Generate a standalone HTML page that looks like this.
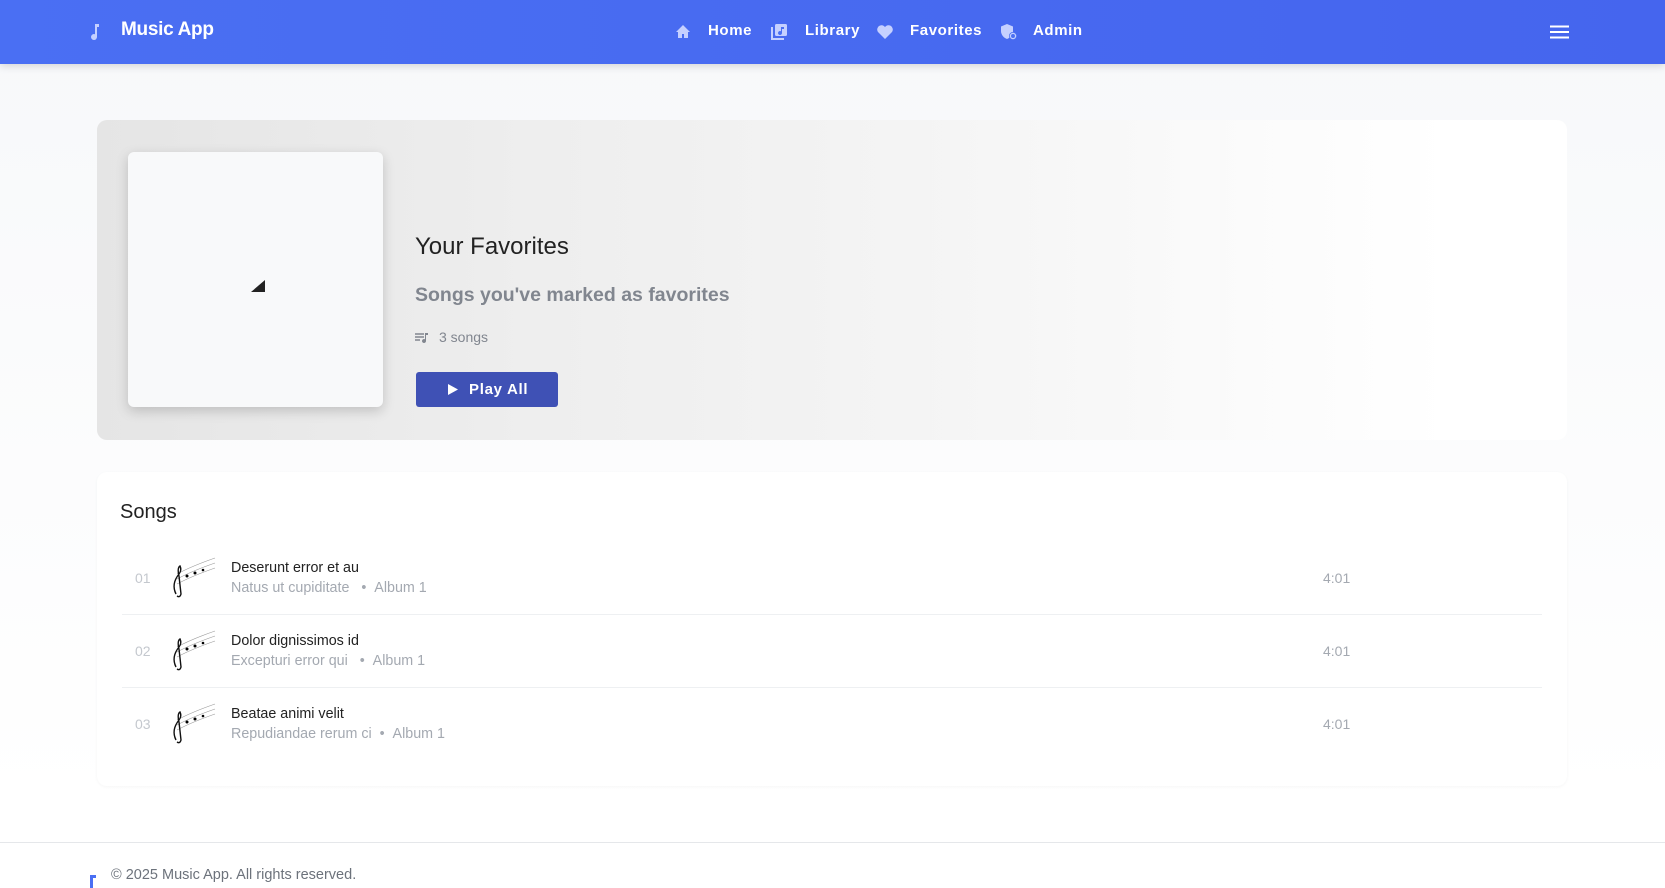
<!DOCTYPE html>
<html><head><meta charset="utf-8"><style>
*{box-sizing:border-box;margin:0;padding:0}
body{width:1665px;height:888px;overflow:hidden;font-family:"Liberation Sans",sans-serif;background:linear-gradient(#f7f8fa,#fff 800px);position:relative}
.nav{position:absolute;left:0;top:0;width:1665px;height:64px;background:linear-gradient(90deg,#4a6ff3,#4565ee);box-shadow:0 2px 8px rgba(0,0,0,.15)}
.nav .t{position:absolute;color:#fff;font-weight:bold;font-size:15px;letter-spacing:.6px;top:22px}
.ic{position:absolute}
.hero{position:absolute;left:97px;top:120px;width:1470px;height:320px;border-radius:10px;background:linear-gradient(90deg,#e5e5e5 0%,#eeeeee 30%,#f4f4f4 55%,#fafafa 75%,#fff 92%)}
.art{position:absolute;left:31px;top:32px;width:255px;height:255px;border-radius:6px;background:#f8f9fa;box-shadow:0 4px 12px rgba(0,0,0,.18)}
.card{position:absolute;left:97px;top:472px;width:1470px;height:314px;background:#fff;border-radius:10px;box-shadow:0 1px 3px rgba(0,0,0,.04)}
.row{position:absolute;left:25px;width:1420px;height:73px}
.row.b{border-bottom:1px solid #eef0f2}
.num{position:absolute;left:13px;top:28px;color:#c4c8ce;font-size:14px}
.th{position:absolute;left:45px;top:12px;width:50px;height:50px}
.ti{position:absolute;left:109px;top:18px;font-size:14.3px;color:#222}
.su{position:absolute;left:109px;top:38px;font-size:14.3px;color:#a4a9b1}
.du{position:absolute;left:1201px;top:28px;font-size:14px;color:#a4a9b1}
</style></head><body>
<div class="nav">
<svg class="ic" style="left:90px;top:22px" width="12" height="20" viewBox="0 0 12 20"><path d="M6 2h3v3H7v10a3 3 0 1 1-2-2.8V2z" fill="#c5d0ff"/></svg>
<div class="t" style="left:121px;top:19px;font-size:19px;letter-spacing:-.3px">Music App</div>
<svg class="ic" style="left:675px;top:24px" width="16" height="15" viewBox="0 0 16 15"><path d="M8 1l7 7h-2v6h-4v-4H7v4H3V8H1z" fill="#c5d0ff"/></svg>
<div class="t" style="left:708px">Home</div>
<svg class="ic" style="left:771px;top:23px" width="17" height="17" viewBox="0 0 17 17"><rect x="4" y="1" width="12" height="12" rx="1.5" fill="#c5d0ff"/><path d="M1 4v12h12" stroke="#c5d0ff" stroke-width="2" fill="none"/><path d="M10 4h3v2h-2v4a2 2 0 1 1-1-1.7z" fill="#4a6ff3"/></svg>
<div class="t" style="left:805px">Library</div>
<svg class="ic" style="left:876px;top:24px" width="18" height="16" viewBox="0 0 18 16"><path d="M9 15L2 8a4 4 0 0 1 7-5a4 4 0 0 1 7 5z" fill="#c5d0ff"/></svg>
<div class="t" style="left:910px">Favorites</div>
<svg class="ic" style="left:1000px;top:23px" width="18" height="18" viewBox="0 0 18 18"><path d="M7 1l6 2.5v4.5c0 4-3 7-6 8-3-1-6-4-6-8V3.5z" fill="#c5d0ff"/><circle cx="13" cy="13" r="4" fill="#4a6ff3"/><circle cx="13" cy="13" r="2.6" fill="none" stroke="#c5d0ff" stroke-width="1.3"/></svg>
<div class="t" style="left:1033px">Admin</div>
<svg class="ic" style="left:1550px;top:25px" width="19" height="14" viewBox="0 0 19 14"><path d="M0 1.5h19M0 7h19M0 12.5h19" stroke="#fff" stroke-width="2"/></svg>
</div>

<div class="hero">
<div class="art"><svg style="position:absolute;left:123px;top:128px" width="14" height="12"><path d="M14 0V12H0z" fill="#222"/></svg></div>
<div style="position:absolute;left:318px;top:113px;font-size:24px;color:#222">Your Favorites</div>
<div style="position:absolute;left:318px;top:164px;font-size:19.5px;color:#81868f;font-weight:bold">Songs you've marked as favorites</div>
<svg style="position:absolute;left:318px;top:212px" width="14" height="12" viewBox="0 0 14 12"><path d="M0 2h9M0 5h9M0 8h5" stroke="#81868f" stroke-width="1.4"/><path d="M10 1h3v2h-2v6a2 2 0 1 1-1-1.7z" fill="#81868f"/></svg>
<div style="position:absolute;left:342px;top:209px;font-size:14px;color:#81868f">3 songs</div>
<div style="position:absolute;left:319px;top:252px;width:142px;height:35px;background:#3f51b5;border-radius:3px;color:#fff;font-weight:bold;font-size:15px;letter-spacing:.7px;line-height:35px;padding-left:53px">Play All<svg style="position:absolute;left:32px;top:12px" width="10" height="11"><path d="M0 0L10 5.5L0 11z" fill="#fff"/></svg></div>
</div>

<div class="card">
<div style="position:absolute;left:23px;top:29px;font-size:20px;color:#222">Songs</div>
<div class="row b" style="top:70px"><div class="num">01</div><svg class="th" viewBox="0 0 50 50"><path d="M10 20q15-8 38-16M10 25q15-8 38-16M10 30q15-8 38-16" stroke="#999" stroke-width=".6" fill="none"/><path d="M9 40q-5-10 3-20q3-4 1-8q-3 2-1 10l2 18q-1 4-4 2" stroke="#111" stroke-width="1.4" fill="none"/><circle cx="20" cy="22" r="1.5"/><circle cx="28" cy="19" r="1.5"/><circle cx="36" cy="16" r="1.3"/></svg><div class="ti">Deserunt error et au</div><div class="su">Natus ut cupiditate &nbsp; • &nbsp;Album 1</div><div class="du">4:01</div></div>
<div class="row b" style="top:143px"><div class="num">02</div><svg class="th" viewBox="0 0 50 50"><path d="M10 20q15-8 38-16M10 25q15-8 38-16M10 30q15-8 38-16" stroke="#999" stroke-width=".6" fill="none"/><path d="M9 40q-5-10 3-20q3-4 1-8q-3 2-1 10l2 18q-1 4-4 2" stroke="#111" stroke-width="1.4" fill="none"/><circle cx="20" cy="22" r="1.5"/><circle cx="28" cy="19" r="1.5"/><circle cx="36" cy="16" r="1.3"/></svg><div class="ti">Dolor dignissimos id</div><div class="su">Excepturi error qui &nbsp; • &nbsp;Album 1</div><div class="du">4:01</div></div>
<div class="row" style="top:216px"><div class="num">03</div><svg class="th" viewBox="0 0 50 50"><path d="M10 20q15-8 38-16M10 25q15-8 38-16M10 30q15-8 38-16" stroke="#999" stroke-width=".6" fill="none"/><path d="M9 40q-5-10 3-20q3-4 1-8q-3 2-1 10l2 18q-1 4-4 2" stroke="#111" stroke-width="1.4" fill="none"/><circle cx="20" cy="22" r="1.5"/><circle cx="28" cy="19" r="1.5"/><circle cx="36" cy="16" r="1.3"/></svg><div class="ti">Beatae animi velit</div><div class="su">Repudiandae rerum ci &nbsp;• &nbsp;Album 1</div><div class="du">4:01</div></div>
</div>

<div style="position:absolute;left:0;top:842px;width:1665px;height:46px;background:#fff;border-top:1px solid #e5e7ea"></div>
<svg style="position:absolute;left:86px;top:872px" width="12" height="16" viewBox="0 0 12 16"><path d="M4 3h6v3H7v10H4z" fill="#4a6ff3"/></svg>
<div style="position:absolute;left:111px;top:867px;font-size:14.5px;color:#6c727b">© 2025 Music App. All rights reserved.</div>
</body></html>
